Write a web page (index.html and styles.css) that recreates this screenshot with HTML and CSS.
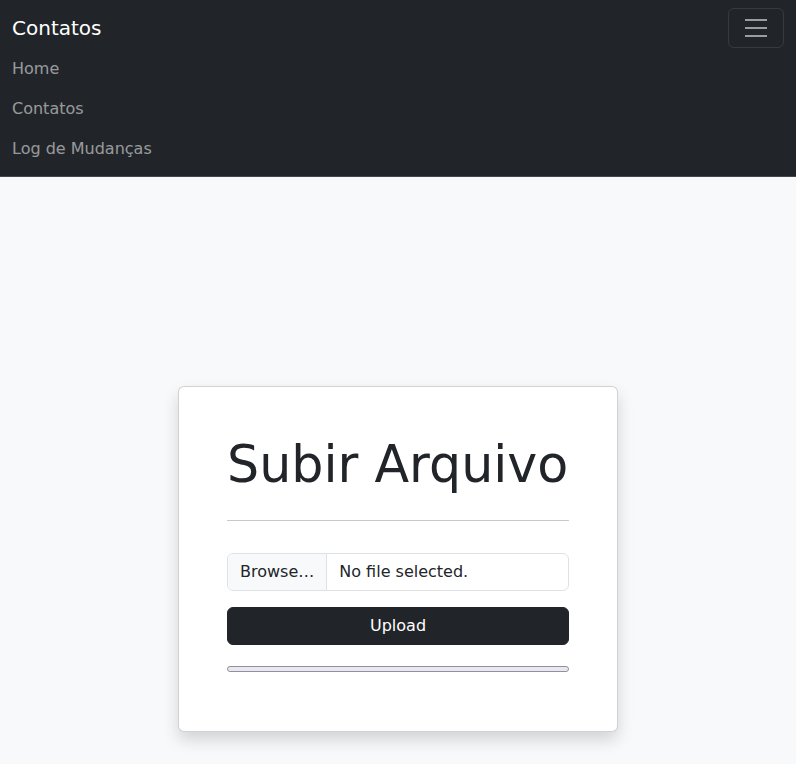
FILE: index.html
```html
<!DOCTYPE html>
<html lang="pt-BR">
<head>
<meta charset="utf-8">
<title>Subir Arquivo</title>
<link rel="stylesheet" href="styles.css">
</head>
<body>
<nav class="navbar">
  <div class="navbar-top">
    <a class="brand" href="#">Contatos</a>
    <button class="toggler" type="button" aria-label="Menu">
      <svg class="toggler-icon" viewBox="0 0 30 30" width="30" height="30">
        <path d="M4 7h22M4 15h22M4 23h22" stroke="rgba(255,255,255,0.55)" stroke-width="2" stroke-linecap="butt" stroke-miterlimit="10" fill="none"/>
      </svg>
    </button>
  </div>
  <ul class="nav-list">
    <li><a class="nav-link" href="#">Home</a></li>
    <li><a class="nav-link" href="#">Contatos</a></li>
    <li><a class="nav-link" href="#">Log de Mudanças</a></li>
  </ul>
</nav>
<main class="main">
  <div class="card">
    <h1 class="title">Subir Arquivo</h1>
    <hr class="divider">
    <div class="file-input">
      <span class="file-btn">Browse…</span>
      <span class="file-name">No file selected.</span>
    </div>
    <button class="upload-btn" type="button">Upload</button>
    <div class="progress"><div class="progress-fill"></div></div>
  </div>
</main>
</body>
</html>
```
FILE: styles.css
```css
* { box-sizing: border-box; }
html, body { margin: 0; padding: 0; }
body {
  font-family: "DejaVu Sans", "Noto Sans", sans-serif;
  font-size: 16px;
  line-height: 1.5;
  color: #212529;
  background: #f8f9fa;
}
.navbar {
  background: #212529;
  padding: 8px 12px 7px;
  border-bottom: 1px solid #43474c;
}
.navbar-top {
  display: flex;
  justify-content: space-between;
  align-items: center;
}
.brand {
  color: #fff;
  text-decoration: none;
  font-size: 20px;
  line-height: 30px;
  padding: 5px 0;
}
.toggler {
  display: flex;
  align-items: center;
  justify-content: center;
  width: 56px;
  height: 40px;
  padding: 4px 12px;
  background: transparent;
  border: 1px solid rgba(255,255,255,0.1);
  border-radius: 6px;
}
.toggler-icon { display: block; }
.nav-list {
  list-style: none;
  margin: 0;
  padding: 1px 0 0;
}
.nav-link {
  display: block;
  padding: 8px 0;
  line-height: 24px;
  color: rgba(255,255,255,0.55);
  text-decoration: none;
}
.main {
  min-height: 764px;
  display: flex;
  align-items: center;
  justify-content: center;
}
.card {
  width: 440px;
  background: #fff;
  border: 1px solid rgba(0,0,0,0.175);
  border-radius: 6px;
  box-shadow: 0 8px 16px rgba(0,0,0,0.15);
  padding: 48px 48px 48px;
}
.title {
  margin: 0;
  font-size: 50.67px;
  font-weight: 400;
  line-height: 60.8px;
  white-space: nowrap;
}
.divider {
  margin: 24px 0 32px;
  border: 0;
  border-top: 1px solid #c8c9ca;
  height: 0;
}
.file-input {
  display: flex;
  height: 38px;
  border: 1px solid #dee2e6;
  border-radius: 6px;
  overflow: hidden;
  line-height: 24px;
}
.file-btn {
  background: #f8f9fa;
  padding: 6px 12px;
  border-right: 1px solid #dee2e6;
}
.file-name {
  padding: 6px 12px;
}
.upload-btn {
  display: block;
  width: 100%;
  height: 38px;
  margin-top: 16px;
  background: #212529;
  color: #fff;
  border: 1px solid #212529;
  border-radius: 6px;
  font-family: inherit;
  font-size: 16px;
  line-height: 24px;
  padding: 6px 12px;
}
.progress {
  margin: 21px 0 11px;
  height: 6px;
  border: 1px solid #9190a3;
  border-radius: 3px;
  background: #e9e9ed;
}
.progress-fill { width: 0; }
```
